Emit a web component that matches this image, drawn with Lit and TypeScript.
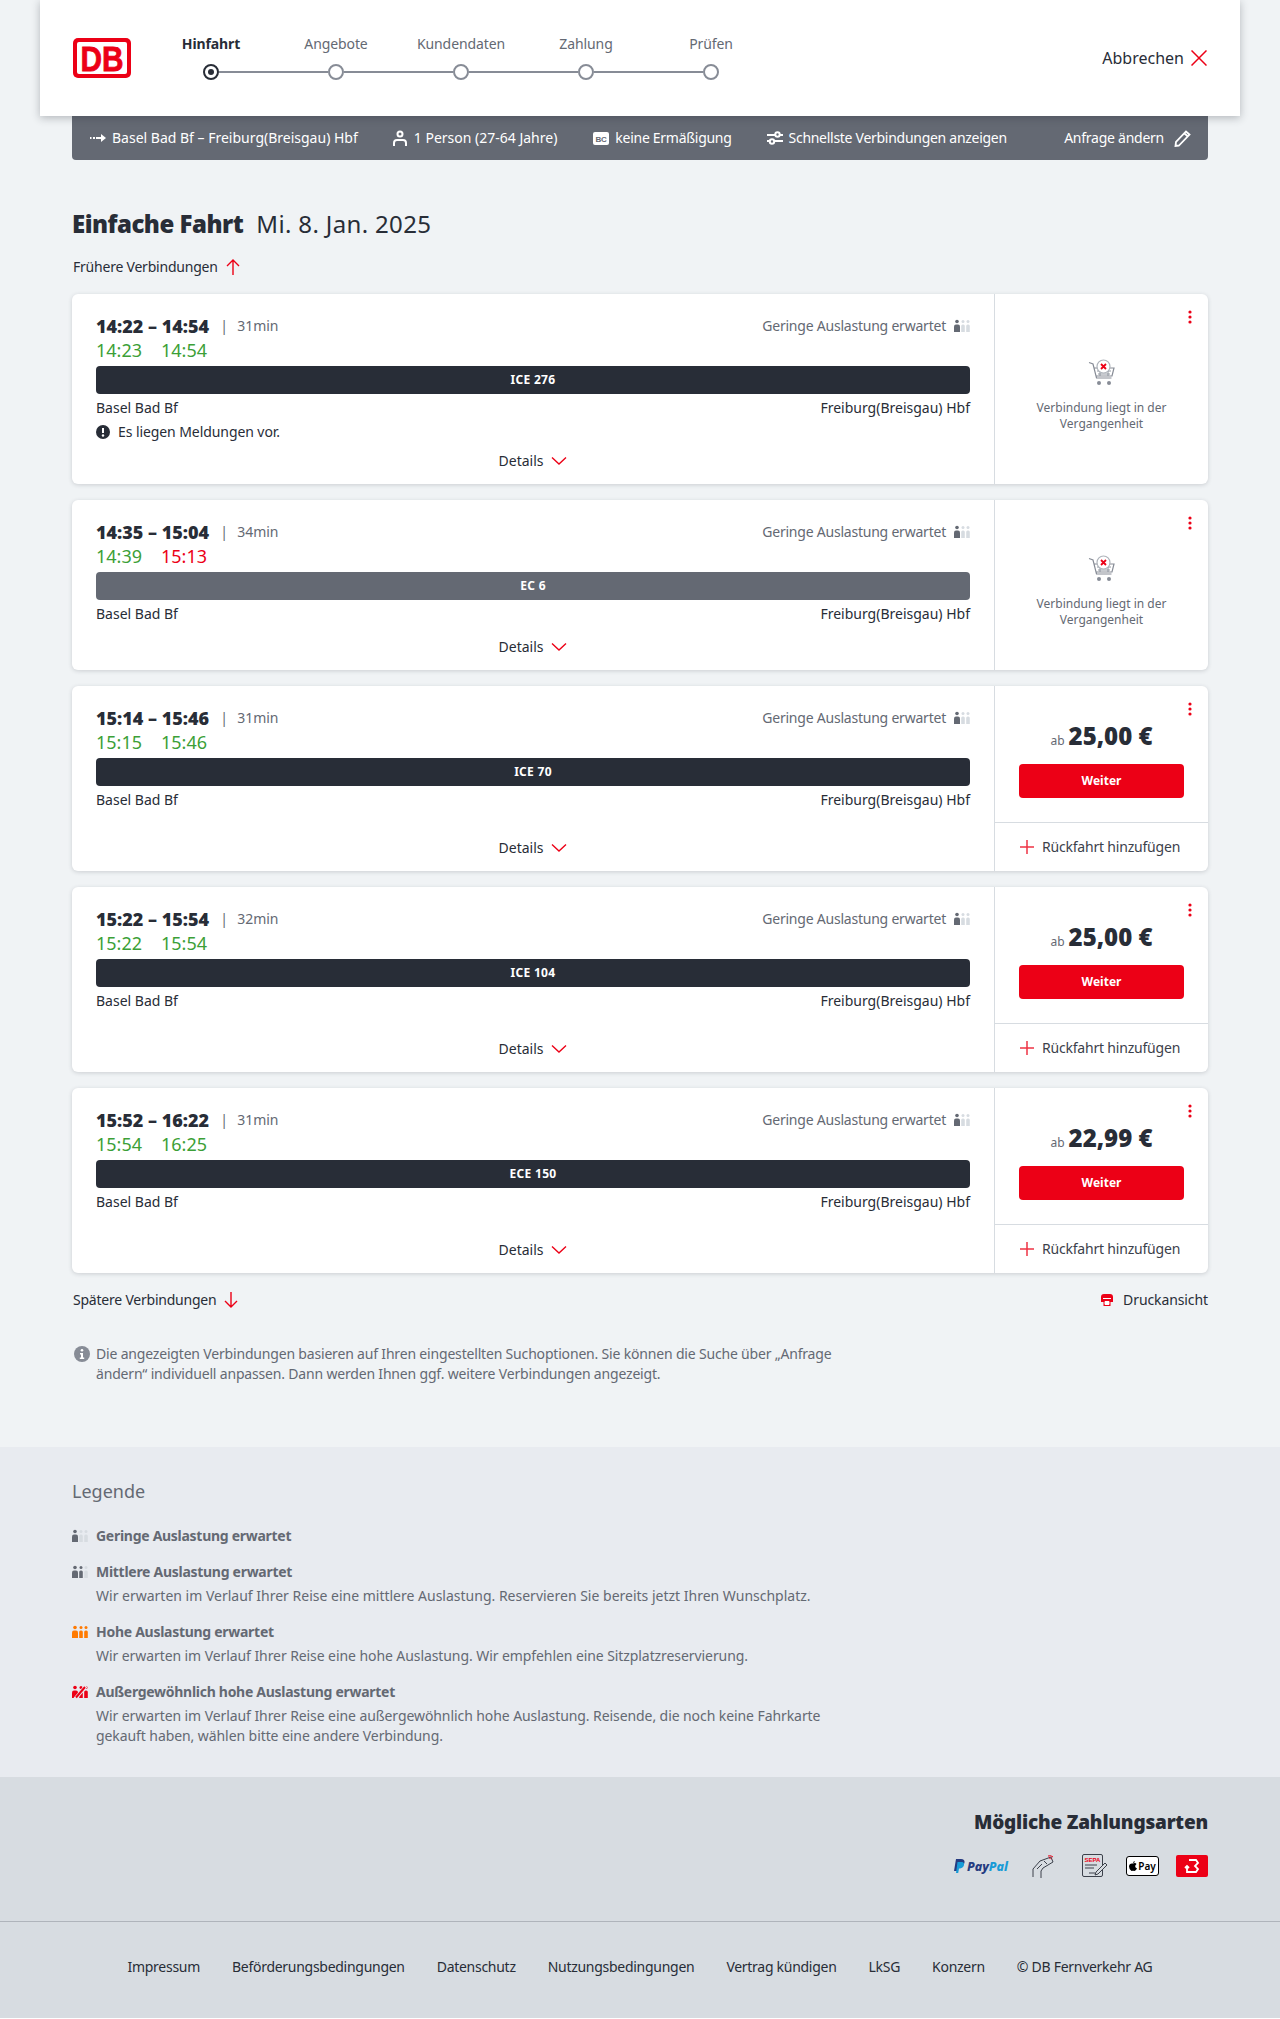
import { LitElement, html, css, svg, nothing } from 'lit';
import { customElement } from 'lit/decorators.js';

const chevron = html`<svg class="ico" width="16" height="10" viewBox="0 0 16 10"><path d="M1 1.500l7 6.500 7-6.500" fill="none" stroke="#ec0016" stroke-width="1.400"/></svg>`;
const dots = html`<svg class="dots" width="4" height="14" viewBox="0 0 4 14"><circle cx="2" cy="2" r="1.600" fill="#ec0016"/><circle cx="2" cy="7" r="1.600" fill="#ec0016"/><circle cx="2" cy="12" r="1.600" fill="#ec0016"/></svg>`;
const plus = html`<svg width="16" height="16" viewBox="0 0 16 16"><path d="M8 1v14M1 8h14" stroke="#ec0016" stroke-width="1.500" opacity=".8"/></svg>`;

// kleines Personen-Icon, Farben je Person
function occ(a: string, b: string, c: string, slash = false) {
  return html`<svg class="occ" width="16" height="14" viewBox="0 0 16 14">
    <circle cx="3" cy="2.500" r="1.800" fill=${a}/><path d="M0 13V7.500q0-2 2-2h2q2 0 2 2V13z" fill=${a}/>
    <circle cx="9" cy="2.500" r="1.500" fill=${b}/><path d="M7.200 13V7q0-1.500 1.500-1.500h.6q1.500 0 1.500 1.500v6z" fill=${b}/>
    <circle cx="14" cy="2.500" r="1.500" fill=${c}/><path d="M12.200 13V7q0-1.500 1.500-1.500h.6q1.500 0 1.500 1.500v6z" fill=${c}/>
    ${slash ? svg`<path d="M3 14L14 1" stroke="#e8ebf0" stroke-width="3.600"/><path d="M4 12.500L13 2" stroke="#ec0016" stroke-width="2"/>` : nothing}
  </svg>`;
}

const cart = html`<svg width="28" height="28" viewBox="0 0 28 28" fill="none">
  <path d="M1 3.500l4 1.500 3.500 14h15M6 9h20l-2 8H8" stroke="#878c96" stroke-width="1.200"/>
  <path d="M9 12h14M10 15h12M12 9v8M20 9v8" stroke="#878c96" stroke-width=".9"/>
  <circle cx="15.500" cy="7.500" r="6.500" fill="#fff" stroke="#afb4bb" stroke-width="1.200"/>
  <path d="M13 5l5 5M18 5l-5 5" stroke="#ec0016" stroke-width="1.800"/>
  <circle cx="11" cy="24" r="2" fill="#878c96"/><circle cx="21" cy="24" r="2" fill="#878c96"/>
</svg>`;

interface Conn {
  plan: string; dur: string; a: string; b: string; bLate?: boolean;
  train: string; past?: boolean; msg?: boolean; price?: string;
}

const conns: Conn[] = [
  { plan: '14:22 – 14:54', dur: '31min', a: '14:23', b: '14:54', train: 'ICE 276', past: true, msg: true },
  { plan: '14:35 – 15:04', dur: '34min', a: '14:39', b: '15:13', bLate: true, train: 'EC 6', past: true },
  { plan: '15:14 – 15:46', dur: '31min', a: '15:15', b: '15:46', train: 'ICE 70', price: '25,00 €' },
  { plan: '15:22 – 15:54', dur: '32min', a: '15:22', b: '15:54', train: 'ICE 104', price: '25,00 €' },
  { plan: '15:52 – 16:22', dur: '31min', a: '15:54', b: '16:25', train: 'ECE 150', price: '22,99 €' },
];

const steps = ['Hinfahrt', 'Angebote', 'Kundendaten', 'Zahlung', 'Prüfen'];
const footerLinks = ['Impressum', 'Beförderungsbedingungen', 'Datenschutz', 'Nutzungsbedingungen', 'Vertrag kündigen', 'LkSG', 'Konzern', '© DB Fernverkehr AG'];

@customElement('app-root')
export class AppRoot extends LitElement {
  static styles = css`
    :host {
      display: block;
      background: #f0f3f5;
      color: #282d37;
      font-family: 'Noto Sans', sans-serif;
      font-size: 14px;
      line-height: 24px;
    }
    svg { display: block; flex: none; }

    .header {
      position: relative;
      z-index: 1;
      margin: 0 40px;
      height: 116px;
      background: #fff;
      box-shadow: 0 2px 8px rgba(40, 45, 55, .3);
      display: flex;
      align-items: center;
      padding: 0 33px;
    }
    .logo { margin-right: 17.500px; }
    .stepper { display: flex; margin-top: -4px; flex: 1; }
    .step { width: 125px; display: flex; flex-direction: column; align-items: center; color: #646973; letter-spacing: -.1px; }
    .step.active { color: #282d37; font-weight: 700; }
    .track { display: flex; align-items: center; width: 100%; height: 16px; margin-top: 8px; }
    .track i { flex: 1; height: 2px; background: #878c96; }
    .step:first-child .track i:first-child, .step:last-child .track i:last-child { background: transparent; }
    .circle { width: 16px; height: 16px; box-sizing: border-box; border: 2px solid #878c96; border-radius: 50%; background: #fff; flex: none; }
    .step.active .circle { border-color: #282d37; display: flex; align-items: center; justify-content: center; }
    .step.active .circle::after { content: ''; width: 6px; height: 6px; border-radius: 50%; background: #282d37; }
    .abort { display: flex; align-items: center; gap: 7px; font-size: 16px; }

    .summary {
      margin: 0 72px;
      height: 44px;
      background: #646973;
      border-radius: 0 0 4px 4px;
      color: #fff;
      display: flex;
      align-items: center;
      padding: 0 17px 0 18px;
    }
    .summary span { display: flex; align-items: center; gap: 6px; margin-right: 35px; white-space: nowrap; }
    .summary span.person { gap: 7px; margin-right: 36px; }
    .summary span.tight { letter-spacing: -.28px; }
    .summary span.change { margin: 0 0 0 auto; gap: 10px; letter-spacing: -.25px; }

    .content { padding: 48px 72px 63px; }
    h1 { margin: 0; font-size: 24px; line-height: 32px; font-weight: 900; letter-spacing: -.5px; display: flex; gap: 13px; }
    h1 em { font-style: normal; font-weight: 400; letter-spacing: .35px; }
    .more { display: flex; align-items: center; gap: 8px; margin-left: 1px; letter-spacing: -.22px; }
    .more.up { margin-top: 15px; margin-bottom: 15px; }
    .more-row { display: flex; justify-content: space-between; margin-top: 15px; }
    .print { display: flex; align-items: center; gap: 10px; letter-spacing: -.1px; }

    .list { display: flex; flex-direction: column; gap: 16px; }
    .card {
      position: relative;
      display: grid;
      grid-template-columns: 923px 213px;
      background: #fff;
      border-radius: 6px;
      box-shadow: 0 1px 4px rgba(40, 45, 55, .18);
      min-height: 170px;
    }
    .card.msg { min-height: 190px; }
    .main { display: flex; flex-direction: column; padding: 20px 24px 11px; border-right: 1px solid #d7dce1; }
    .top { display: flex; align-items: center; }
    .plan { font-size: 18px; font-weight: 900; }
    .dur { color: #646973; margin-left: 11px; padding-left: 17px; position: relative; }
    .dur::before { content: '|'; position: absolute; left: 0; }
    .load { margin-left: auto; display: flex; align-items: center; gap: 8px; color: #646973; letter-spacing: -.22px; }
    .real { display: flex; font-size: 18px; color: #3c9f37; }
    .real b { font-weight: 400; width: 65px; }
    .real b.late { color: #ec0016; }
    .bar {
      margin-top: 4px;
      height: 28px;
      border-radius: 4px;
      background: #282d37;
      color: #fff;
      font-size: 12px;
      font-weight: 700;
      letter-spacing: .3px;
      display: flex;
      align-items: center;
      justify-content: center;
    }
    .bar.past { background: #646973; }
    .stations { display: flex; justify-content: space-between; margin-top: 2px; }
    .note { display: flex; align-items: center; gap: 8px; letter-spacing: -.08px; }
    .details { margin-top: auto; display: flex; align-items: center; justify-content: center; gap: 8px; }

    .side { display: flex; flex-direction: column; }
    .gone {
      flex: 1;
      display: flex;
      flex-direction: column;
      align-items: center;
      justify-content: center;
      padding: 12px 32px 0;
      color: #646973;
      font-size: 12px;
      line-height: 16px;
      text-align: center;
      gap: 13px;
    }
    .dots { position: absolute; right: 16px; top: 16px; }
    .buy { height: 137px; box-sizing: border-box; border-bottom: 1px solid #d7dce1; padding: 32px 24px 0; display: flex; flex-direction: column; align-items: center; }
    .price { font-size: 24px; font-weight: 900; line-height: 36px; display: flex; align-items: baseline; gap: 4px; }
    .price small { font-size: 12px; font-weight: 400; color: #646973; }
    .btn { margin-top: 5px; width: 165px; height: 34px; border-radius: 4px; background: #ec0016; color: #fff; font-size: 12px; font-weight: 700; display: flex; align-items: center; justify-content: center; }
    .back { height: 48px; display: flex; align-items: center; gap: 7px; padding-left: 24px; color: #3c414b; letter-spacing: -.2px; }

    .info { display: flex; gap: 6px; margin-top: 32px; max-width: 780px; color: #646973; line-height: 20px; letter-spacing: -.18px; }
    .info svg { margin: 2px 0 0 2px; }

    .legend { background: #e8ebf0; padding: 32px 72px; color: #646973; height: 330px; box-sizing: border-box; }
    .legend h2 { margin: 0 0 21px; font-size: 18px; font-weight: 400; line-height: 24px; }
    .legend-row { display: grid; grid-template-columns: 24px 760px; margin-bottom: 12px; }
    .legend-row.long { margin-bottom: 14px; }
    .legend-row svg { margin-top: 5px; }
    .legend-row b { display: block; font-weight: 700; letter-spacing: -.28px; }
    .legend-row p { margin: 2px 0 0; grid-column: 2; line-height: 20px; letter-spacing: -.08px; }
    .legend-row p.wide { letter-spacing: 0; }

    .pay { background: #d7dce1; height: 145px; box-sizing: border-box; padding: 32px 72px 0; display: flex; flex-direction: column; align-items: flex-end; border-bottom: 1px solid #afb4bb; }
    .pay h3 { margin: 0; font-size: 19px; font-weight: 900; line-height: 26px; letter-spacing: -.2px; }
    .pay-icons { display: flex; align-items: center; margin-top: 19px; }
    .paypal { width: 56px; font: italic 800 12.500px 'Noto Sans', sans-serif; color: #253b80; display: flex; align-items: center; gap: 2px; }
    .paypal em { color: #179bd7; }
    .hand { margin-left: 22px; }
    .sepa { margin-left: 28px; }
    .apple { margin-left: 18px; width: 33px; height: 20px; box-sizing: border-box; border: 1px solid #000; border-radius: 3px; background: #fff; color: #000; font-size: 10px; font-weight: 600; line-height: 18px; display: flex; align-items: center; justify-content: center; gap: 1px; }
    .dbpay { margin-left: 17px; width: 32px; height: 22px; border-radius: 2px; background: #ec0016; display: flex; align-items: center; justify-content: center; }

    .footer { background: #d7dce1; height: 96px; box-sizing: border-box; padding-bottom: 6px; display: flex; align-items: center; justify-content: center; gap: 32px; letter-spacing: -.28px; }
  `;

  renderCard(c: Conn) {
    return html`<div class="card ${c.msg ? 'msg' : ''}">
      <div class="main">
        <div class="top">
          <span class="plan">${c.plan}</span>
          <span class="dur">${c.dur}</span>
          <span class="load">Geringe Auslastung erwartet ${occ('#646973', '#d7dce1', '#d7dce1')}</span>
        </div>
        <div class="real"><b>${c.a}</b><b class=${c.bLate ? 'late' : ''}>${c.b}</b></div>
        <div class="bar ${c.past && !c.msg ? 'past' : ''}">${c.train}</div>
        <div class="stations"><span>Basel Bad Bf</span><span>Freiburg(Breisgau) Hbf</span></div>
        ${c.msg ? html`<div class="note">
          <svg width="14" height="14" viewBox="0 0 14 14"><circle cx="7" cy="7" r="7" fill="#282d37"/><path d="M7 3v5" stroke="#fff" stroke-width="2"/><circle cx="7" cy="10.500" r="1.200" fill="#fff"/></svg>
          Es liegen Meldungen vor.</div>` : nothing}
        <div class="details">Details ${chevron}</div>
      </div>
      <div class="side">
        ${c.price ? html`
          <div class="buy">
            <div class="price"><small>ab</small>${c.price}</div>
            <div class="btn">Weiter</div>
          </div>
          <div class="back">${plus} Rückfahrt hinzufügen</div>` : html`
          <div class="gone">${cart}<span>Verbindung liegt in der Vergangenheit</span></div>`}
      </div>
      ${dots}
    </div>`;
  }

  render() {
    return html`
      <div class="header">
        <svg class="logo" width="58" height="40" viewBox="0 0 58 40">
          <rect width="58" height="40" rx="5" fill="#ec0016"/>
          <rect x="4" y="4" width="50" height="32" rx="2" fill="#fff"/>
          <text x="29" y="32.500" text-anchor="middle" textLength="43" lengthAdjust="spacingAndGlyphs" font-family="Liberation Sans" font-weight="700" font-size="35" fill="#ec0016" stroke="#ec0016" stroke-width=".8">DB</text>
        </svg>
        <div class="stepper">
          ${steps.map((s, i) => html`<div class="step ${i === 0 ? 'active' : ''}">
            <span>${s}</span>
            <div class="track"><i></i><div class="circle"></div><i></i></div>
          </div>`)}
        </div>
        <div class="abort">Abbrechen
          <svg width="16" height="16" viewBox="0 0 16 16"><path d="M.5.500l15 15M15.500.500l-15 15" stroke="#ec0016" stroke-width="1.500"/></svg>
        </div>
      </div>

      <div class="summary">
        <span><svg width="16" height="10" viewBox="0 0 16 10" fill="#fff"><path d="M0 4h1.500v2H0zM3 4h2v2H3zM6 4h5V1l5 4-5 4V6H6z"/></svg>Basel Bad Bf – Freiburg(Breisgau) Hbf</span>
        <span class="person"><svg width="14" height="16" viewBox="0 0 14 16" fill="none" stroke="#fff" stroke-width="2"><circle cx="7" cy="4" r="2.500"/><path d="M1 16v-3q0-3 3-3h6q3 0 3 3v3"/></svg>1 Person (27-64 Jahre)</span>
        <span class="tight"><svg width="16" height="13" viewBox="0 0 16 13"><rect width="16" height="13" rx="2" fill="#fff"/><text x="8" y="9.500" text-anchor="middle" font-family="Liberation Sans" font-weight="700" font-size="8" fill="#646973">BC</text></svg>keine Ermäßigung</span>
        <span class="tight"><svg width="16" height="14" viewBox="0 0 16 14" fill="none" stroke="#fff" stroke-width="2"><path d="M0 4h16M0 10h16"/><circle cx="10.500" cy="3.500" r="2.200" fill="#646973"/><circle cx="5" cy="10.500" r="2.200" fill="#646973"/></svg>Schnellste Verbindungen anzeigen</span>
        <span class="change">Anfrage ändern
          <svg width="17" height="17" viewBox="0 0 17 17" fill="none" stroke="#fff" stroke-width="1.800"><path d="M5 15.500L1.500 16 2 12 12 1.500 15.500 4.500zM10.500 3.500l3.500 3"/></svg>
        </span>
      </div>

      <div class="content">
        <h1>Einfache Fahrt <em>Mi. 8. Jan. 2025</em></h1>
        <div class="more up">Frühere Verbindungen
          <svg width="14" height="16" viewBox="0 0 14 16" fill="none" stroke="#ec0016" stroke-width="1.400"><path d="M7 16V1M1 7l6-6 6 6"/></svg>
        </div>
        <div class="list">${conns.map((c) => this.renderCard(c))}</div>
        <div class="more-row">
          <div class="more">Spätere Verbindungen
            <svg width="14" height="16" viewBox="0 0 14 16" fill="none" stroke="#ec0016" stroke-width="1.400"><path d="M7 0v15M1 9l6 6 6-6"/></svg>
          </div>
          <div class="print">
            <svg width="12" height="13" viewBox="0 0 12 13"><path d="M3 0h6q3 0 3 3v5H9.500v4h-7V8H0V3q0-3 3-3z" fill="#ec0016"/><path d="M2 4.500h8M4 7.500h4v3H4z" stroke="#fff" fill="#fff" stroke-width="1"/></svg>
            Druckansicht
          </div>
        </div>
        <div class="info">
          <svg width="16" height="16" viewBox="0 0 16 16"><circle cx="8" cy="8" r="8" fill="#878c96"/><circle cx="8" cy="4.200" r="1.300" fill="#fff"/><path d="M6 7h3v4.500h1.200V13H5.800v-1.500H7V8.500H6z" fill="#fff"/></svg>
          <div>Die angezeigten Verbindungen basieren auf Ihren eingestellten Suchoptionen. Sie können die Suche über „Anfrage ändern“ individuell anpassen. Dann werden Ihnen ggf. weitere Verbindungen angezeigt.</div>
        </div>
      </div>

      <div class="legend">
        <h2>Legende</h2>
        <div class="legend-row">${occ('#646973', '#d7dce1', '#d7dce1')}<b>Geringe Auslastung erwartet</b></div>
        <div class="legend-row long">${occ('#646973', '#646973', '#d7dce1')}<b>Mittlere Auslastung erwartet</b>
          <p class="wide">Wir erwarten im Verlauf Ihrer Reise eine mittlere Auslastung. Reservieren Sie bereits jetzt Ihren Wunschplatz.</p></div>
        <div class="legend-row long">${occ('#ff7a00', '#ff7a00', '#ff7a00')}<b>Hohe Auslastung erwartet</b>
          <p>Wir erwarten im Verlauf Ihrer Reise eine hohe Auslastung. Wir empfehlen eine Sitzplatzreservierung.</p></div>
        <div class="legend-row">${occ('#ec0016', '#ec0016', '#ec0016', true)}<b>Außergewöhnlich hohe Auslastung erwartet</b>
          <p>Wir erwarten im Verlauf Ihrer Reise eine außergewöhnlich hohe Auslastung. Reisende, die noch keine Fahrkarte gekauft haben, wählen bitte eine andere Verbindung.</p></div>
      </div>

      <div class="pay">
        <h3>Mögliche Zahlungsarten</h3>
        <div class="pay-icons">
          <div class="paypal">
            <svg width="11" height="14" viewBox="0 0 11 14"><path d="M2 0h5q4 0 3.500 3.500T6 7.500H4L3 12H0z" fill="#253b80"/><path d="M3.500 3h5q2 .5 1.500 3T6 9.500H5L4.200 14H2z" fill="#179bd7"/></svg>
            <span>Pay<em>Pal</em></span>
          </div>
          <svg class="hand" width="22" height="24" viewBox="0 0 22 24" fill="none" stroke="#3c414b" stroke-width="1"><path d="M1 15l7-8 11-4 2 5-10 6-2 3v7M1 15v8M5 15l5-5M12 7l3 3"/><path d="M16 2q3-1 5 1M17 4q2 0 2.500 1" stroke="#ec0016"/></svg>
          <svg class="sepa" width="26" height="24" viewBox="0 0 26 24" fill="none" stroke="#3c414b">
            <rect x=".5" y=".5" width="20" height="22" rx="1.500"/>
            <text x="10.500" y="8" text-anchor="middle" font-family="Liberation Sans" font-weight="700" font-size="6" fill="#ec0016" stroke="none">SEPA</text>
            <path d="M3 11h12M3 14h9M7 19h6"/>
            <path d="M14 18l9-9 2 2-9 9-3 1z" fill="#d7dce1"/>
          </svg>
          <div class="apple"><svg width="8" height="10" viewBox="0 0 8 10"><path d="M4 2.500Q6.500 1.500 7.500 3 6 4 6.200 5.500 6.500 7 8 7.300 7 10 5.500 10 4 9.500 2.500 10 .2 9 0 5.500.2 2 4 2.500zM4 2Q4 .5 5.800 0 6 1.800 4 2z" fill="#000"/></svg>Pay</div>
          <div class="dbpay"><svg width="16" height="16" viewBox="0 0 16 16" fill="none" stroke="#fff" stroke-width="1.800"><path d="M5 2h7l2 3-3 3 3 3-2 3H3v-5M1 10l2-2 2 2"/></svg></div>
        </div>
      </div>

      <div class="footer">${footerLinks.map((l) => html`<span>${l}</span>`)}</div>
    `;
  }
}
